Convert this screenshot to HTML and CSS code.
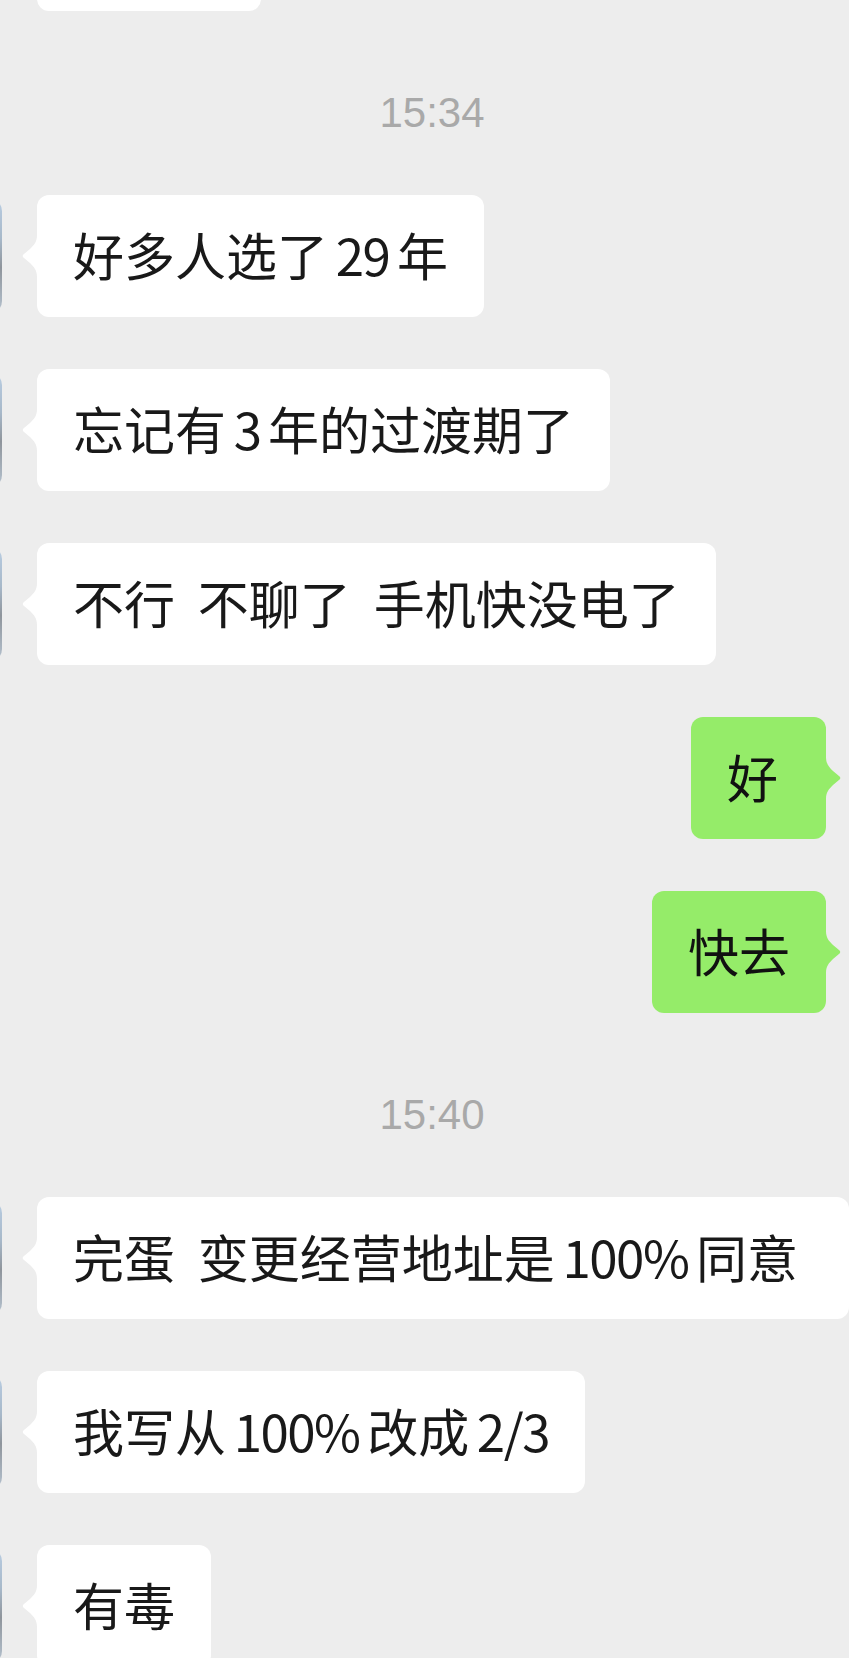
FILE: index.html
```html
<!DOCTYPE html>
<html lang="zh-CN">
<head>
    <meta charset="UTF-8">
    <meta name="viewport" content="width=device-width, initial-scale=1.0">
    <title>聊天</title>
    <link rel="stylesheet" href="styles.css">
</head>
<body>
    <div class="chat">
        <div class="row left row-cut">
            <div class="bubble bubble-cut"></div>
        </div>

        <div class="time">15:34</div>

        <div class="row left">
            <div class="avatar"></div>
            <div class="bubble">好多人选了<span class="en">29</span>年</div>
        </div>
        <div class="row left">
            <div class="avatar"></div>
            <div class="bubble">忘记有<span class="en">3</span>年的过渡期了</div>
        </div>
        <div class="row left">
            <div class="avatar"></div>
            <div class="bubble">不行  不聊了  手机快没电了</div>
        </div>
        <div class="row right">
            <div class="bubble mine">好</div>
        </div>
        <div class="row right">
            <div class="bubble mine">快去</div>
        </div>

        <div class="time">15:40</div>

        <div class="row left">
            <div class="avatar"></div>
            <div class="bubble bubble-long">完蛋  变更经营地址是<span class="en">100%</span>同意</div>
        </div>
        <div class="row left">
            <div class="avatar"></div>
            <div class="bubble">我写从<span class="en">100%</span>改成<span class="en en-end">2/3</span></div>
        </div>
        <div class="row left">
            <div class="avatar"></div>
            <div class="bubble">有毒</div>
        </div>
    </div>
</body>
</html>
```

FILE: styles.css
```css
body {
    margin: 0;
    background-color: #ededed;
    font-family: "Noto Sans CJK SC", "Noto Sans", sans-serif;
    color: #191919;
    overflow: hidden;
}

.chat {
    display: flex;
    flex-direction: column;
    gap: 52px;
    width: 849px;
    height: 1658px;
    overflow: hidden;
}

.row {
    display: flex;
    align-items: flex-start;
}

.row.left {
    padding-left: 37px;
}

.row.right {
    justify-content: flex-end;
    padding-right: 23px;
}

.row-cut {
    margin-top: -111px;
}

.avatar {
    flex: none;
    width: 120px;
    height: 114px;
    margin-left: -155px;
    margin-right: 35px;
    margin-top: 4px;
    border-radius: 12px;
    background: linear-gradient(180deg, #b9cde2 0%, #a7b8c9 35%, #8f959c 60%, #b5c2cf 100%);
}

.time {
    margin-top: 20px;
    padding-left: 15px;
    height: 60px;
    line-height: 60px;
    text-align: center;
    font-family: "Liberation Sans", Arial, sans-serif;
    font-size: 42px;
    color: #a9a9a9;
}

.bubble {
    position: relative;
    box-sizing: border-box;
    min-width: 135px;
    height: 122px;
    padding: 23px 36px 27px 36px;
    font-size: 51px;
    line-height: 72px;
    white-space: pre;
    background-color: #ffffff;
    border-radius: 12px;
}

.bubble .en {
    margin: 0 0.15em;
    letter-spacing: -1.5px;
}

.bubble .en-end {
    margin-right: 0;
}

.bubble::before {
    content: "";
    position: absolute;
    top: 40px;
    left: -15px;
    width: 16px;
    height: 42px;
    background-color: inherit;
    clip-path: path("M16 0 L15 0 C15 7 12 10 8 14 L1.4 19.6 Q0 21 1.4 22.4 L8 28 C12 32 15 35 15 42 L16 42 Z");
}

.bubble.mine {
    background-color: #95ec69;
    color: #111111;
}

.bubble.mine::before {
    left: auto;
    right: -15px;
    transform: scaleX(-1);
}

.bubble-cut {
    width: 224px;
}

.bubble-cut::before {
    display: none;
}

.bubble-long {
    padding-right: 90px;
}
```
